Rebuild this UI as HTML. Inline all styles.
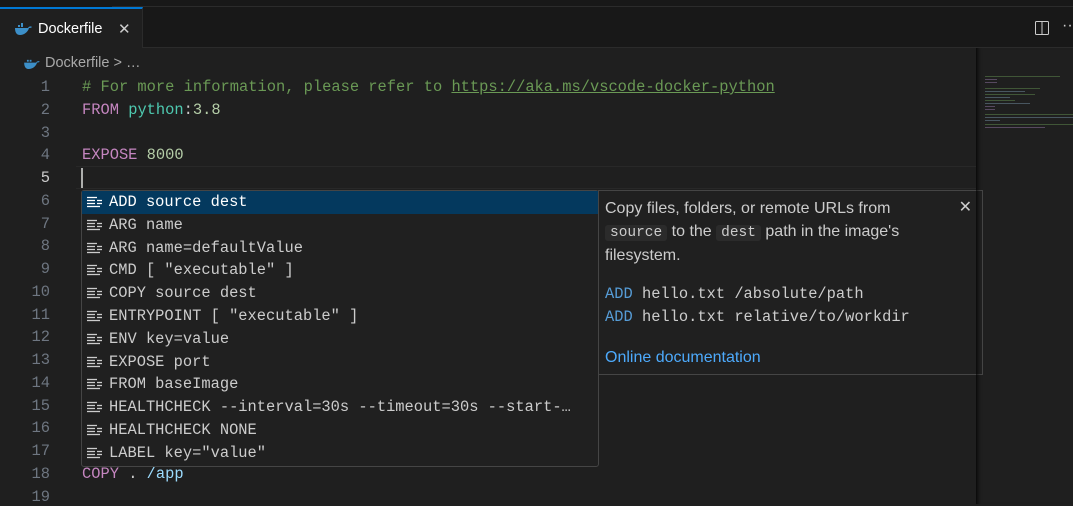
<!DOCTYPE html>
<html><head><style>
*{margin:0;padding:0;box-sizing:border-box}
body{width:1073px;height:504px;background:#1f1f1f;overflow:hidden;position:relative;font-family:"Liberation Mono",monospace;font-size:15.4px;color:#ccc}
.tabbar{position:absolute;left:0;top:0;width:1073px;height:48px;background:#181818;border-bottom:1px solid #2b2b2b}
.tab{position:absolute;left:0;top:7px;width:143px;height:41px;background:#1f1f1f;border-top:2px solid #0078d4;border-right:1px solid #2b2b2b}
.tab span{position:absolute;left:38px;top:12px;font-family:"Liberation Sans",sans-serif;font-size:14.5px;color:#fff}
.tab .x{position:absolute;left:118px;top:11px;font-family:"Liberation Sans",sans-serif;font-size:15px;color:#ccc}
.topline{position:absolute;left:112px;top:0;width:961px;height:7px;border-bottom:1px solid #2b2b2b}
.crumb{position:absolute;left:45px;top:55px;font-family:"Liberation Sans",sans-serif;font-size:14.5px;color:#a9a9a9}
.ln{position:absolute;left:0;width:50px;text-align:right;color:#6e7681}
.code{position:absolute;left:82px;white-space:pre}
.cur{position:absolute;left:76px;top:166px;width:900px;height:23px;border-top:1px solid #282828;border-bottom:1px solid #282828}
.caret{position:absolute;left:81px;top:168px;width:2px;height:20px;background:#aeafad}
.sug{position:absolute;left:81px;top:190px;width:518px;height:277px;background:#202020;border:1px solid #454545;border-radius:3px}
.it{position:absolute;left:0;width:516px;height:22.8px;white-space:pre;color:#ccc}
.it i{position:absolute;left:4px;top:5px;width:18px;height:13px}
.it b{font-weight:normal;position:absolute;left:27px;top:2px}
.sel{background:#04395e;color:#fff}
.det{position:absolute;left:598px;top:190px;width:385px;height:185px;background:#202020;border:1px solid #454545;font-family:"Liberation Sans",sans-serif;font-size:16px;color:#ccc}
.det p{position:absolute;left:6px;white-space:pre}
.cd{background:#2b2b2b;border-radius:3px;font-family:"Liberation Mono",monospace;font-size:14.5px;padding:0 5px}
.mm{position:absolute;left:976px;top:48px;width:97px;height:456px;box-shadow:inset 5px 0 5px -4px #000}
</style></head><body>
<div class="tabbar"><div class="topline"></div>
<div class="tab">
<svg style="position:absolute;left:14px;top:14px" width="18" height="12" viewBox="0 0 18 12"><path d="M1 5h13c1-2 3-2 4-1c-1 1-2 1-3 1c-1 4-5 7-9 7c-3 0-5-2-5-7z" fill="#3c8fc8"/><rect x="4" y="2" width="2" height="2" fill="#3c8fc8"/><rect x="7" y="2" width="2" height="2" fill="#3c8fc8"/><rect x="7" y="0" width="2" height="2" fill="#3c8fc8"/></svg>
<span>Dockerfile</span><span class="x">✕</span></div>
<svg style="position:absolute;left:1034px;top:20px" width="16" height="16" viewBox="0 0 16 16"><rect x="1.5" y="1.5" width="13" height="13" rx="1" fill="none" stroke="#ccc"/><line x1="8" y1="2" x2="8" y2="14" stroke="#ccc"/></svg>
<span style="position:absolute;left:1062px;top:17px;color:#ccc;font-family:'Liberation Sans';font-size:16px">···</span>
</div>
<svg style="position:absolute;left:23px;top:58px" width="17" height="11" viewBox="0 0 18 12"><path d="M1 5h13c1-2 3-2 4-1c-1 1-2 1-3 1c-1 4-5 7-9 7c-3 0-5-2-5-7z" fill="#3c8fc8"/><rect x="4" y="2" width="2" height="2" fill="#3c8fc8"/><rect x="7" y="2" width="2" height="2" fill="#3c8fc8"/></svg>
<div class="crumb">Dockerfile &gt; …</div>
<div class="cur"></div><div class="caret"></div>
<div class="ln" style="top:78px">1</div><div class="ln" style="top:101px">2</div><div class="ln" style="top:124px">3</div><div class="ln" style="top:146px">4</div><div class="ln" style="top:169px;color:#ccc">5</div><div class="ln" style="top:192px">6</div><div class="ln" style="top:215px">7</div><div class="ln" style="top:237px">8</div><div class="ln" style="top:260px">9</div><div class="ln" style="top:283px">10</div><div class="ln" style="top:306px">11</div><div class="ln" style="top:328px">12</div><div class="ln" style="top:351px">13</div><div class="ln" style="top:374px">14</div><div class="ln" style="top:397px">15</div><div class="ln" style="top:419px">16</div><div class="ln" style="top:442px">17</div><div class="ln" style="top:465px">18</div><div class="ln" style="top:488px">19</div>
<div class="code" style="top:78px;color:#6a9955"># For more information, please refer to <u>https://aka.ms/vscode-docker-python</u></div>
<div class="code" style="top:101px"><span style="color:#c586c0">FROM</span> <span style="color:#4ec9b0">python</span>:<span style="color:#b5cea8">3.8</span></div>
<div class="code" style="top:146px"><span style="color:#c586c0">EXPOSE</span> <span style="color:#b5cea8">8000</span></div>
<div class="code" style="top:465px"><span style="color:#c586c0">COPY</span> . <span style="color:#9cdcfe">/app</span></div>
<div class="sug">
<div class="it sel" style="top:0"><b>ADD source dest</b></div>
<div class="it" style="top:22.8px"><b>ARG name</b></div>
<div class="it" style="top:45.6px"><b>ARG name=defaultValue</b></div>
<div class="it" style="top:68.4px"><b>CMD [ "executable" ]</b></div>
<div class="it" style="top:91.2px"><b>COPY source dest</b></div>
<div class="it" style="top:114px"><b>ENTRYPOINT [ "executable" ]</b></div>
<div class="it" style="top:136.8px"><b>ENV key=value</b></div>
<div class="it" style="top:159.6px"><b>EXPOSE port</b></div>
<div class="it" style="top:182.4px"><b>FROM baseImage</b></div>
<div class="it" style="top:205.2px"><b>HEALTHCHECK --interval=30s --timeout=30s --start-…</b></div>
<div class="it" style="top:228px"><b>HEALTHCHECK NONE</b></div>
<div class="it" style="top:250.8px"><b>LABEL key="value"</b></div>
</div>
<div class="det">
<span style="position:absolute;right:10px;top:6px;font-size:16px">✕</span>
<p style="top:9px">Copy files, folders, or remote URLs from</p>
<p style="top:32px"><span class="cd">source</span> to the <span class="cd">dest</span> path in the image's</p>
<p style="top:56px">filesystem.</p>
<p style="top:94px;font-family:'Liberation Mono';font-size:15.4px"><span style="color:#569cd6">ADD</span> hello.txt /absolute/path</p>
<p style="top:117px;font-family:'Liberation Mono';font-size:15.4px"><span style="color:#569cd6">ADD</span> hello.txt relative/to/workdir</p>
<p style="top:158px;color:#4daafc">Online documentation</p>
</div>
<div class="mm"></div>
<svg style="position:absolute;left:985px;top:76px" width="88" height="52">
<g opacity="0.45">
<rect x="0" y="0" width="75" height="1" fill="#6a9955"/><rect x="0" y="3" width="12" height="1" fill="#9c7cb0"/><rect x="0" y="6" width="12" height="1" fill="#9c7cb0"/>
<rect x="0" y="12" width="55" height="1" fill="#6a9955"/><rect x="0" y="15" width="40" height="1" fill="#7a9ab0"/>
<rect x="0" y="18" width="50" height="1" fill="#6a9955"/><rect x="0" y="21" width="25" height="1" fill="#7a9ab0"/>
<rect x="0" y="24" width="30" height="1" fill="#6a9955"/><rect x="0" y="27" width="45" height="1" fill="#7a9ab0"/>
<rect x="0" y="30" width="10" height="1" fill="#9c7cb0"/><rect x="0" y="33" width="10" height="1" fill="#9c7cb0"/>
<rect x="0" y="38" width="88" height="1" fill="#6a9955"/><rect x="0" y="41" width="88" height="1" fill="#7a9ab0"/><rect x="0" y="44" width="15" height="1" fill="#7a9ab0"/>
<rect x="0" y="48" width="88" height="1" fill="#6a9955"/><rect x="0" y="51" width="60" height="1" fill="#9c7cb0"/>
</g></svg>
<script>
document.querySelectorAll('.it').forEach(function(e){
e.insertAdjacentHTML('afterbegin','<i><svg width="18" height="13" viewBox="0 0 18 13"><g stroke="'+(e.classList.contains('sel')?'#fff':'#ccc')+'" stroke-width="1.3"><line x1="1" y1="1.5" x2="11" y2="1.5"/><line x1="1" y1="4.5" x2="9" y2="4.5"/><line x1="11" y1="4.5" x2="16" y2="4.5"/><line x1="1" y1="7.5" x2="9" y2="7.5"/><line x1="11" y1="7.5" x2="16" y2="7.5"/><line x1="1" y1="10.5" x2="14" y2="10.5"/></g></svg></i>');
});
</script>
</body></html>
